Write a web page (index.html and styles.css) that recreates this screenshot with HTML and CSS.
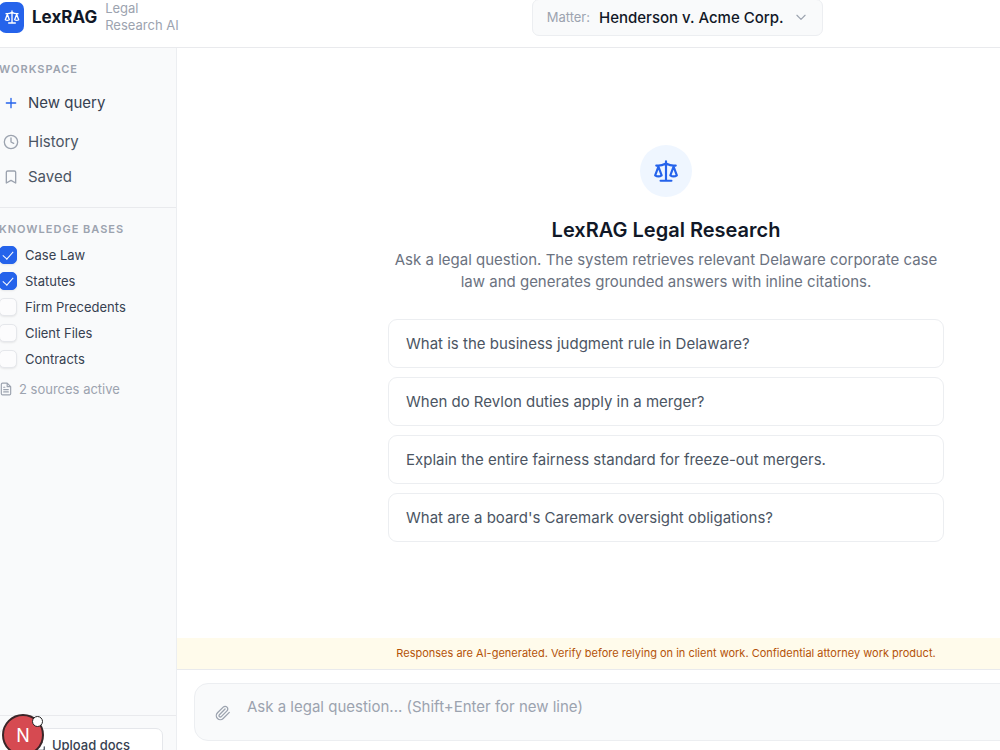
FILE: index.html
```html
<!DOCTYPE html>
<html lang="en">

<head>
    <meta charset="UTF-8">
    <meta name="viewport" content="width=device-width, initial-scale=1.0">
    <title>LexRAG Legal Research</title>

    <link rel="stylesheet" href="styles.css">
</head>

<body>
    <svg class="sprite" aria-hidden="true">
        <symbol id="icon-scale" viewBox="0 0 24 24">
            <path d="m16 16 3-8 3 8c-.87.65-1.92 1-3 1s-2.13-.35-3-1Z" />
            <path d="m2 16 3-8 3 8c-.87.65-1.92 1-3 1s-2.13-.35-3-1Z" />
            <path d="M7 21h10M12 3v18M3 7h2c2 0 5-1 7-2 2 1 5 2 7 2h2" />
        </symbol>
    </svg>

    <div class="app">
        <header class="topbar">
            <div class="brand">
                <span class="brand-mark"><svg class="icon"><use href="#icon-scale" /></svg></span>
                <span class="brand-name">LexRAG</span>
                <span class="brand-tag">Legal Research AI</span>
            </div>
            <div class="matter">
                <label for="matter">Matter:</label>
                <select id="matter">
                    <option>Henderson v. Acme Corp.</option>
                </select>
                <svg class="icon" viewBox="0 0 24 24"><path d="m5 9 7 7 7-7" /></svg>
            </div>
        </header>

        <div class="body">
            <aside class="sidebar">
                <nav class="section">
                    <h2 class="section-title">Workspace</h2>
                    <button class="nav-item nav-new">
                        <svg class="icon" viewBox="0 0 24 24"><path d="M5 12h14M12 5v14" /></svg>New query
                    </button>
                    <button class="nav-item">
                        <svg class="icon" viewBox="0 0 24 24"><circle cx="12" cy="12" r="10" /><path d="M12 6v6l4 2" /></svg>History
                    </button>
                    <button class="nav-item">
                        <svg class="icon" viewBox="0 0 24 24"><path d="m19 21-7-4-7 4V5a2 2 0 0 1 2-2h10a2 2 0 0 1 2 2z" /></svg>Saved
                    </button>
                </nav>

                <section class="section">
                    <h2 class="section-title kb-title">Knowledge Bases</h2>
                    <label class="kb"><input type="checkbox" checked>Case Law</label>
                    <label class="kb"><input type="checkbox" checked>Statutes</label>
                    <label class="kb"><input type="checkbox">Firm Precedents</label>
                    <label class="kb"><input type="checkbox">Client Files</label>
                    <label class="kb"><input type="checkbox">Contracts</label>
                    <p class="sources">
                        <svg class="icon" viewBox="0 0 24 24"><path d="M14 2H6a2 2 0 0 0-2 2v16a2 2 0 0 0 2 2h12a2 2 0 0 0 2-2V8zM14 2v6h6M8 9h2M8 13h8M8 17h8" /></svg>2 sources active
                    </p>
                </section>

                <div class="sidebar-footer">
                    <button class="upload">
                        <svg class="icon" viewBox="0 0 24 24"><path d="M21 15v4a2 2 0 0 1-2 2H5a2 2 0 0 1-2-2v-4M17 8l-5-5-5 5M12 3v12" /></svg>Upload docs
                    </button>
                </div>
            </aside>

            <main class="main">
                <div class="welcome">
                    <div class="welcome-mark"><svg class="icon"><use href="#icon-scale" /></svg></div>
                    <h1>LexRAG Legal Research</h1>
                    <p>Ask a legal question. The system retrieves relevant Delaware corporate case law and generates grounded answers with inline citations.</p>
                    <div class="suggestions">
                        <button>What is the business judgment rule in Delaware?</button>
                        <button>When do Revlon duties apply in a merger?</button>
                        <button>Explain the entire fairness standard for freeze-out mergers.</button>
                        <button>What are a board's Caremark oversight obligations?</button>
                    </div>
                </div>

                <div class="notice">Responses are AI-generated. Verify before relying on in client work. Confidential attorney work product.</div>

                <div class="composer">
                    <div class="composer-box">
                        <button class="attach" aria-label="Attach file">
                            <svg class="icon" viewBox="0 0 24 24"><path d="m21.44 11.05-9.19 9.19a6 6 0 0 1-8.49-8.49l8.57-8.57A4 4 0 1 1 18 8.84l-8.59 8.57a2 2 0 0 1-2.83-2.83l8.49-8.48" /></svg>
                        </button>
                        <textarea rows="1" aria-label="Question" placeholder="Ask a legal question... (Shift+Enter for new line)"></textarea>
                    </div>
                </div>
            </main>
        </div>
    </div>

    <button class="dev-badge">N<span class="dev-dot"></span></button>
</body>

</html>
```
FILE: styles.css
```css
* {
    box-sizing: border-box;
}

body {
    margin: 0;
    height: 100vh;
    overflow: hidden;
    background: #fff;
    color: #111827;
    font-family: Inter, "Liberation Sans", sans-serif;
    font-size: 15px;
}

button,
select,
textarea {
    font: inherit;
    color: inherit;
    margin: 0;
}

button {
    cursor: pointer;
}

.sprite {
    display: none;
}

.icon {
    flex-shrink: 0;
    width: 16px;
    height: 16px;
    fill: none;
    stroke: currentColor;
    stroke-width: 2;
    stroke-linecap: round;
    stroke-linejoin: round;
}

/* the shell bleeds past the window on every side */
.app {
    display: flex;
    flex-direction: column;
    height: calc(100vh + 36px);
    margin: -12px -155px 0 -16px;
}

.topbar {
    display: flex;
    align-items: center;
    height: 60px;
    padding: 0 0 1px 15px;
    border-bottom: 1px solid #e9eaed;
}

.brand {
    display: flex;
    align-items: center;
    gap: 8px;
}

.brand-mark {
    display: flex;
    align-items: center;
    justify-content: center;
    width: 25px;
    height: 31px;
    border-radius: 7px;
    background: #2563eb;
    color: #fff;
}

.brand-name {
    font-size: 17px;
    font-weight: 700;
}

.brand-tag {
    width: 90px;
    font-size: 13px;
    line-height: 17px;
    color: #9ca3af;
}

.matter {
    display: flex;
    align-items: center;
    height: 37px;
    margin: 0 332px 0 auto;
    padding: 0 14px;
    border: 1px solid #eceef1;
    border-radius: 7px;
    background: #f9fafb;
}

.matter label {
    margin-right: 9px;
    font-size: 13px;
    color: #9ca3af;
}

.matter select {
    appearance: none;
    padding: 0;
    border: 0;
    background: none;
    font-weight: 500;
}

.matter .icon {
    width: 14px;
    height: 14px;
    margin-left: 10px;
    color: #9ca3af;
}

.body {
    display: flex;
    flex: 1;
    min-height: 0;
}

.sidebar {
    display: flex;
    flex-direction: column;
    flex-shrink: 0;
    width: 193px;
    border-right: 1px solid #eceef1;
    background: #f9fafb;
}

.section {
    padding: 13px 15px;
}

.section + .section {
    border-top: 1px solid #e9eaed;
}

.section-title {
    margin: 0 0 8px;
    font-size: 11px;
    font-weight: 600;
    line-height: 16px;
    letter-spacing: 1px;
    text-transform: uppercase;
    color: #9ca3af;
}

.nav-item {
    display: flex;
    align-items: center;
    gap: 9px;
    width: 100%;
    height: 35px;
    padding: 0 4px;
    border: 0;
    background: none;
    color: #4b5563;
}

.nav-item .icon {
    color: #9ca3af;
}

.nav-new {
    margin-bottom: 4px;
    color: #374151;
}

.nav-new .icon {
    color: #2563eb;
}

.kb-title {
    margin-bottom: 5px;
}

.kb {
    display: flex;
    align-items: center;
    gap: 8px;
    height: 26px;
    font-size: 13px;
    color: #374151;
}

.kb input {
    appearance: none;
    display: grid;
    place-items: center;
    width: 18px;
    height: 18px;
    margin: 0;
    border: 1px solid #e5e7eb;
    border-radius: 5px;
    background: #fcfcfd;
    box-shadow: 0 1px 2px rgba(0, 0, 0, 0.08);
}

.kb input:checked {
    border-color: #2563eb;
    background: #2563eb;
}

.kb input:checked::after {
    content: "";
    width: 5px;
    height: 9px;
    margin-bottom: 3px;
    border: solid #fff;
    border-width: 0 1px 1px 0;
    transform: rotate(42deg);
}

.sources {
    display: flex;
    align-items: center;
    gap: 6px;
    margin: 9px 0 0;
    font-size: 13px;
    line-height: 16px;
    color: #9ca3af;
}

.sources .icon {
    width: 14px;
    height: 14px;
}

.sidebar-footer {
    margin-top: auto;
    padding: 12px 13px 12px 15px;
    border-top: 1px solid #e9eaed;
}

.upload {
    display: flex;
    align-items: center;
    justify-content: center;
    gap: 6px;
    width: 100%;
    height: 34px;
    border: 1px solid #e5e7eb;
    border-radius: 7px;
    background: #fff;
    font-size: 13px;
    font-weight: 500;
    color: #374151;
}

.upload .icon {
    width: 14px;
    height: 14px;
}

.main {
    display: flex;
    flex-direction: column;
    flex: 1;
    min-width: 0;
}

.welcome {
    display: flex;
    flex-direction: column;
    align-items: center;
    justify-content: center;
    flex: 1;
}

.welcome-mark {
    display: flex;
    align-items: center;
    justify-content: center;
    width: 52px;
    height: 52px;
    border-radius: 50%;
    background: #eff6ff;
    color: #2563eb;
}

.welcome-mark .icon {
    width: 26px;
    height: 26px;
}

.welcome h1 {
    margin: 18px 0 4px;
    font-size: 20px;
    font-weight: 600;
    line-height: 30px;
}

.welcome p {
    width: 556px;
    margin: 0 0 26px;
    line-height: 22px;
    text-align: center;
    color: #6b7280;
}

.suggestions {
    display: flex;
    flex-direction: column;
    gap: 9px;
    width: 556px;
}

.suggestions button {
    height: 49px;
    padding: 0 17px;
    border: 1px solid #eceef1;
    border-radius: 9px;
    background: #fff;
    text-align: left;
    color: #4b5563;
}

.notice {
    height: 32px;
    border-bottom: 1px solid #e9eaed;
    background: #fffbeb;
    font-size: 11px;
    line-height: 31px;
    text-align: center;
    color: #b45309;
}

.composer {
    padding: 13px 17px 33px;
}

.composer-box {
    display: flex;
    align-items: center;
    gap: 16px;
    height: 58px;
    padding: 0 20px;
    border: 1px solid #eceef1;
    border-radius: 14px;
    background: #f9fafb;
}

.attach {
    display: flex;
    padding: 2px 0 0;
    border: 0;
    background: none;
    color: #9ca3af;
}

.composer textarea {
    flex: 1;
    height: 32px;
    padding: 0;
    border: 0;
    outline: 0;
    background: none;
    line-height: 22px;
    resize: none;
}

.composer textarea::placeholder {
    color: #9ca3af;
}

.dev-badge {
    position: fixed;
    bottom: -6px;
    left: 2px;
    width: 42px;
    height: 42px;
    padding: 0;
    border: 2px solid #3a2528;
    border-radius: 50%;
    background: #d64a51;
    font-size: 18px;
    color: #fff;
}

.dev-dot {
    position: absolute;
    top: 0;
    right: -1px;
    width: 11px;
    height: 11px;
    border: 1px solid #222;
    border-radius: 50%;
    background: #fff;
}
```
